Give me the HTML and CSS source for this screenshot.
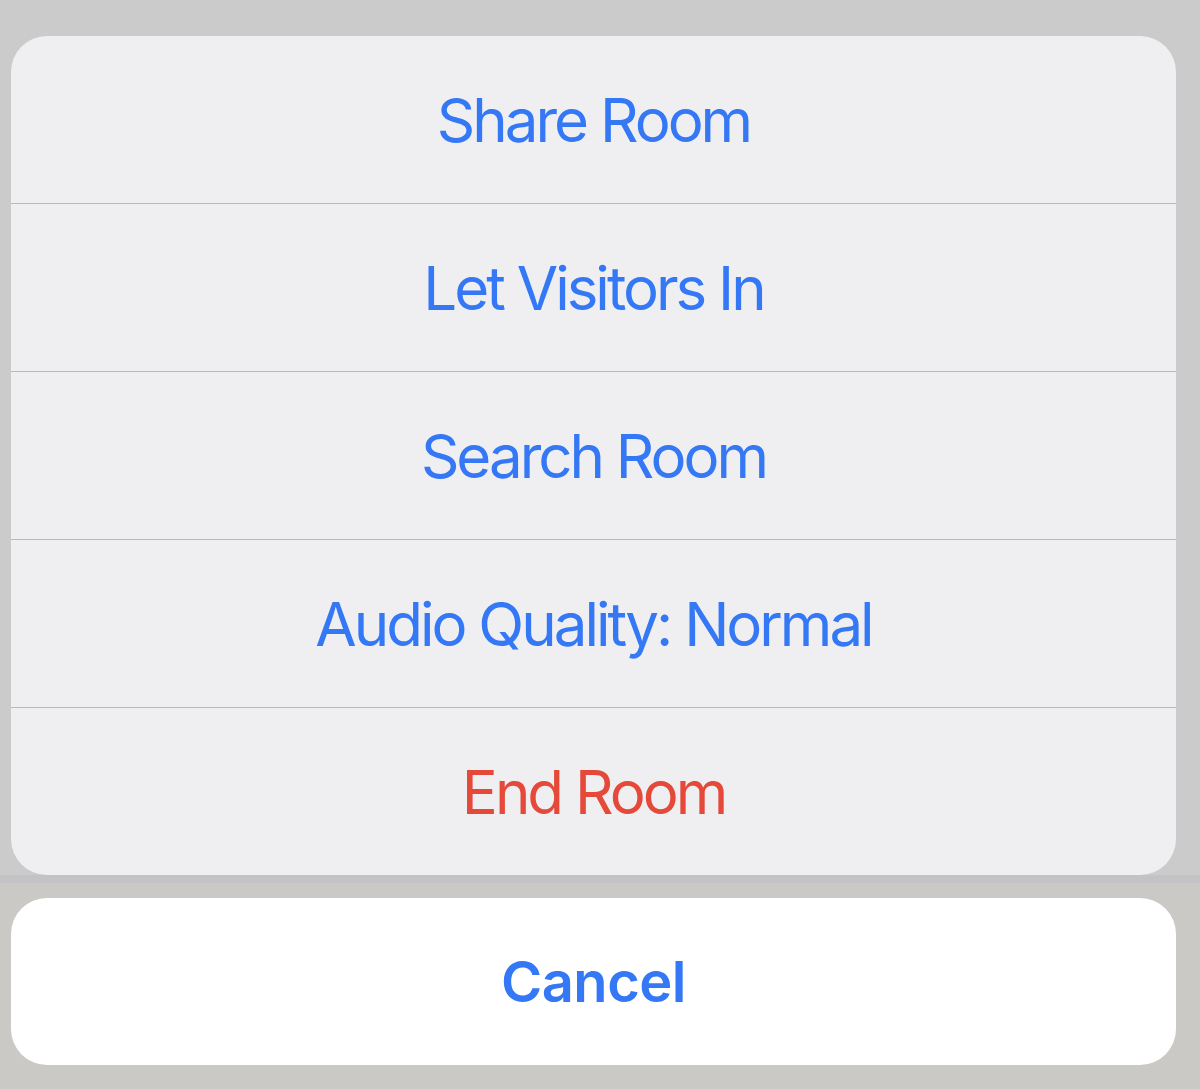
FILE: index.html
```html
<!DOCTYPE html>
<html lang="en">
  <head>
    <meta charset="UTF-8" />
    <meta name="viewport" content="width=device-width, initial-scale=1.0" />
    <title>Room Actions</title>
    <link rel="stylesheet" href="styles.css">
  </head>
  <body>
    <div class="overlay">
      <div class="action-sheet">
        <button class="action">Share Room</button>
        <button class="action">Let Visitors In</button>
        <button class="action">Search Room</button>
        <button class="action">Audio Quality: Normal</button>
        <button class="action destructive">End Room</button>
      </div>
    </div>
    <div class="cancel-area">
      <button class="cancel">Cancel</button>
    </div>
  </body>
</html>
```

FILE: styles.css
```css
html,
body {
  margin: 0;
  padding: 0;
}

body {
  font-family: Inter, "Noto Sans", sans-serif;
  background-color: #cac9c6;
  height: 1089px;
  overflow: hidden;
}

.overlay {
  background-color: #cbcbcb;
  padding: 36px 24px 0 11px;
}

.action-sheet {
  display: flex;
  flex-direction: column;
  background-color: #efeff1;
  border-radius: 36px;
  overflow: hidden;
}

.action {
  height: 168px;
  border: none;
  border-top: 1px solid #b9b9bb;
  background: transparent;
  font-family: inherit;
  font-size: 60px;
  font-weight: 400;
  letter-spacing: -3px;
  color: #3478f6;
  padding: 0;
}

.action:first-child {
  height: 167px;
  border-top: none;
}

.action.destructive {
  color: #e5493a;
}

.cancel-area {
  border-top: 8px solid #c3c3c5;
  padding: 15px 24px 0 11px;
}

.cancel {
  display: block;
  width: 100%;
  height: 167px;
  border: none;
  border-radius: 36px;
  background-color: #ffffff;
  font-family: inherit;
  font-size: 56px;
  font-weight: 600;
  letter-spacing: -0.5px;
  color: #3478f6;
}
```
